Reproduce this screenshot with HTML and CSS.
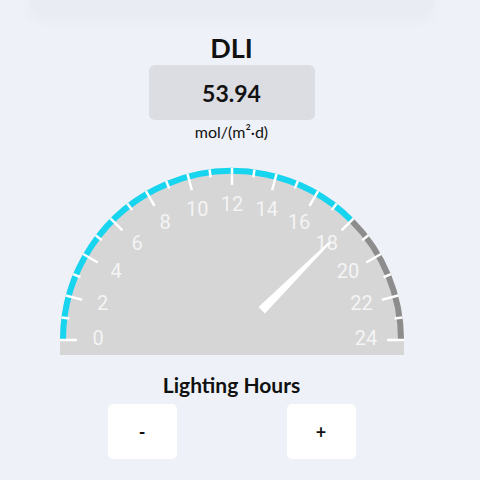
FILE: index.html
```html
<!DOCTYPE html>
<html lang="en">
<head>
  <meta charset="UTF-8" />
  <meta name="viewport" content="width=device-width, initial-scale=1.0"/>
  <title>DLI</title>
  <link rel="stylesheet" href="styles.css">
</head>
<body>
  <div class="screen">
    <div class="top-card"></div>

    <!-- DLI readout -->
    <h2 class="title">DLI</h2>
    <div class="value-box">53.94</div>
    <p class="unit">mol/(m²·d)</p>

    <!-- Gauge: 0-24 hours, center at (173,180), radius 172 -->
    <svg class="gauge" width="346" height="196" viewBox="0 0 346 196">
      <path d="M1 180 A172 172 0 0 1 345 180 L345 195 L1 195 Z" fill="#d6d6d6"/>
      <path d="M4 180 A169 169 0 0 1 292.5 60.5" fill="none" stroke="#17d4ef" stroke-width="6"/>
      <path d="M292.5 60.5 A169 169 0 0 1 342 180" fill="none" stroke="#8d8d8d" stroke-width="6"/>

      <g stroke="#ffffff" stroke-width="2.5">
        <line x1="1" y1="180" x2="18" y2="180" transform="rotate(0 173 180)"/>
        <line x1="1" y1="180" x2="9" y2="180" transform="rotate(7.5 173 180)"/>
        <line x1="1" y1="180" x2="18" y2="180" transform="rotate(15 173 180)"/>
        <line x1="1" y1="180" x2="9" y2="180" transform="rotate(22.5 173 180)"/>
        <line x1="1" y1="180" x2="18" y2="180" transform="rotate(30 173 180)"/>
        <line x1="1" y1="180" x2="9" y2="180" transform="rotate(37.5 173 180)"/>
        <line x1="1" y1="180" x2="18" y2="180" transform="rotate(45 173 180)"/>
        <line x1="1" y1="180" x2="9" y2="180" transform="rotate(52.5 173 180)"/>
        <line x1="1" y1="180" x2="18" y2="180" transform="rotate(60 173 180)"/>
        <line x1="1" y1="180" x2="9" y2="180" transform="rotate(67.5 173 180)"/>
        <line x1="1" y1="180" x2="18" y2="180" transform="rotate(75 173 180)"/>
        <line x1="1" y1="180" x2="9" y2="180" transform="rotate(82.5 173 180)"/>
        <line x1="1" y1="180" x2="18" y2="180" transform="rotate(90 173 180)"/>
        <line x1="1" y1="180" x2="9" y2="180" transform="rotate(97.5 173 180)"/>
        <line x1="1" y1="180" x2="18" y2="180" transform="rotate(105 173 180)"/>
        <line x1="1" y1="180" x2="9" y2="180" transform="rotate(112.5 173 180)"/>
        <line x1="1" y1="180" x2="18" y2="180" transform="rotate(120 173 180)"/>
        <line x1="1" y1="180" x2="9" y2="180" transform="rotate(127.5 173 180)"/>
        <line x1="1" y1="180" x2="18" y2="180" transform="rotate(135 173 180)"/>
        <line x1="1" y1="180" x2="9" y2="180" transform="rotate(142.5 173 180)"/>
        <line x1="1" y1="180" x2="18" y2="180" transform="rotate(150 173 180)"/>
        <line x1="1" y1="180" x2="9" y2="180" transform="rotate(157.5 173 180)"/>
        <line x1="1" y1="180" x2="18" y2="180" transform="rotate(165 173 180)"/>
        <line x1="1" y1="180" x2="9" y2="180" transform="rotate(172.5 173 180)"/>
        <line x1="1" y1="180" x2="18" y2="180" transform="rotate(180 173 180)"/>
      </g>

      <g class="labels">
        <text x="39" y="178">0</text>
        <text x="43.6" y="143.3">2</text>
        <text x="57" y="111">4</text>
        <text x="78.2" y="83.2">6</text>
        <text x="106" y="62">8</text>
        <text x="138.3" y="48.6">10</text>
        <text x="173" y="44">12</text>
        <text x="207.7" y="48.6">14</text>
        <text x="240" y="62">16</text>
        <text x="267.8" y="83.2">18</text>
        <text x="289" y="111">20</text>
        <text x="302.4" y="143.3">22</text>
        <text x="307" y="178">24</text>
      </g>

      <!-- needle at 18h -->
      <polygon points="131,175.5 131,184.5 35,181 35,179" fill="#ffffff" transform="rotate(135 173 180)"/>
    </svg>

    <h3 class="label">Lighting Hours</h3>
    <div class="controls">
      <button class="step">-</button>
      <button class="step">+</button>
    </div>
  </div>
</body>
</html>
```

FILE: styles.css
```css
:root {
  --bg: #eef1f7;
  --box: #dcdde3;
  --text: #111111;
}

* {
  margin: 0;
  padding: 0;
  box-sizing: border-box;
  font-family: 'Lato', 'Noto Sans', sans-serif;
}

body {
  background: var(--bg);
  overflow: hidden;
}

.screen {
  width: 463px;
  height: 480px;
  display: flex;
  flex-direction: column;
  align-items: center;
}

.top-card {
  width: 405px;
  height: 12px;
  background: #e9ecf3;
  border-radius: 0 0 30px 30px;
  box-shadow: 0 4px 18px rgba(0,0,0,0.05);
}

.title {
  margin-top: 19px;
  font-size: 27px;
  line-height: 34px;
  font-weight: 700;
  color: var(--text);
}

.value-box {
  width: 166px;
  height: 55px;
  background: var(--box);
  border-radius: 6px;
  display: flex;
  align-items: center;
  justify-content: center;
  font-size: 23px;
  font-weight: 700;
  color: var(--text);
}

.unit {
  margin-top: 2px;
  font-size: 16px;
  line-height: 20px;
  font-weight: 400;
  color: var(--text);
}

.gauge {
  margin-top: 18px;
  display: block;
}

.labels text {
  font-family: 'Roboto', 'Liberation Sans', sans-serif;
  font-weight: 400;
  font-size: 20px;
  fill: #f4f4f4;
  text-anchor: middle;
  dominant-baseline: central;
}

.label {
  margin-top: 17px;
  font-size: 21px;
  line-height: 24px;
  font-weight: 700;
  color: var(--text);
}

.controls {
  margin-top: 7px;
  display: flex;
  gap: 110px;
}

.step {
  width: 69px;
  height: 55px;
  background: white;
  border: none;
  border-radius: 5px;
  font-size: 18px;
  font-weight: 700;
  color: var(--text);
  cursor: pointer;
}
```
